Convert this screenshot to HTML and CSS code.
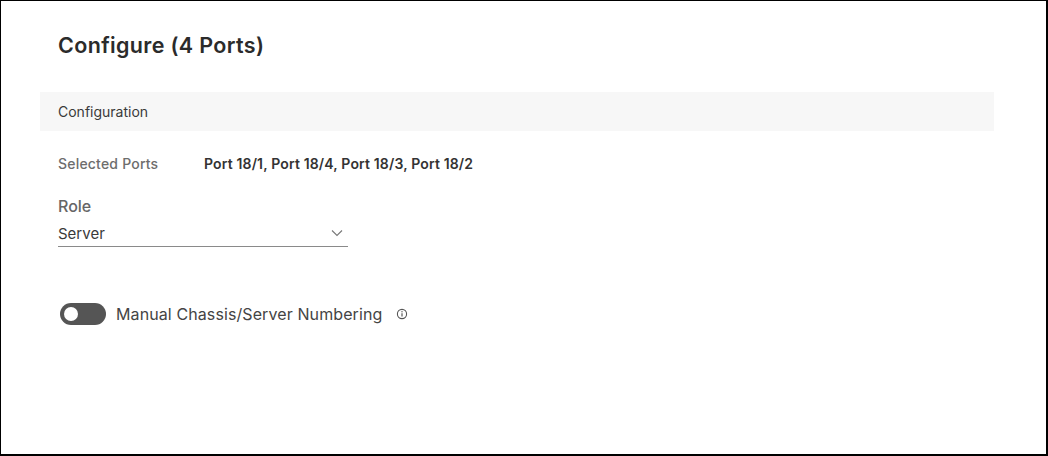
FILE: index.html
```html
<!DOCTYPE html>
<html>
<head>
<meta charset="utf-8">
<link rel="stylesheet" href="styles.css">
</head>
<body>
<div class="frame">
  <h1 class="title">Configure (4 Ports)</h1>
  <div class="section-bar">Configuration</div>
  <div class="content">
    <div class="ports-row">
      <span class="ports-label">Selected Ports</span>
      <span class="ports-value">Port 18/1, Port 18/4, Port 18/3, Port 18/2</span>
    </div>
    <div class="field">
      <div class="field-label">Role</div>
      <div class="select">
        <span>Server</span>
        <svg class="chevron" width="12" height="8" viewBox="0 0 12 8"><path d="M1 1.5 L6 6.5 L11 1.5" fill="none" stroke="#777" stroke-width="1.1"/></svg>
      </div>
    </div>
    <div class="toggle-row">
      <span class="toggle"><span class="knob"></span></span>
      <span class="toggle-label">Manual Chassis/Server Numbering</span>
      <svg class="info" width="12" height="12" viewBox="0 0 12 12"><circle cx="6" cy="6" r="4.6" fill="none" stroke="#555" stroke-width="1.1"/><path d="M6 5.2 V8.4" stroke="#555" stroke-width="1.2"/><circle cx="6" cy="3.7" r="0.7" fill="#555"/></svg>
    </div>
  </div>
</div>
</body>
</html>
```

FILE: styles.css
```css
html, body {
  margin: 0;
  padding: 0;
  background: #fff;
}
body {
  font-family: Inter, "Noto Sans", sans-serif;
  color: #333;
}
.frame {
  box-sizing: border-box;
  width: 1048px;
  height: 456px;
  border-style: solid;
  border-color: #000;
  border-width: 1px 2px 2px 1px;
  padding: 0 52px 0 39px;
}
.title {
  margin: 31px 0 0 18px;
  font-size: 21.5px;
  font-weight: 600;
  line-height: 26px;
  color: #2b2b2b;
  letter-spacing: 0.35px;
}
.section-bar {
  margin-top: 34px;
  height: 39px;
  background: #f7f7f7;
  display: flex;
  align-items: center;
  padding-left: 18px;
  font-size: 14px;
  color: #3a3a3a;
}
.content {
  padding-left: 18px;
}
.ports-row {
  display: flex;
  align-items: center;
  margin-top: 23px;
  height: 18px;
  font-size: 14px;
}
.ports-label {
  width: 146px;
  color: #6d6d6d;
  font-weight: 500;
  letter-spacing: 0.2px;
}
.ports-value {
  color: #333;
  font-weight: 600;
  letter-spacing: 0.15px;
}
.field {
  margin-top: 24px;
  width: 290px;
}
.field-label {
  font-size: 16px;
  color: #666;
  font-weight: 500;
  line-height: 20px;
}
.select {
  display: flex;
  align-items: center;
  justify-content: space-between;
  height: 26px;
  border-bottom: 1px solid #8a8a8a;
  font-size: 15px;
  color: #3a3a3a;
  margin-top: 4px;
  padding-right: 5px;
}
.chevron {
  display: block;
}
.toggle-row {
  display: flex;
  align-items: center;
  margin-top: 56px;
  margin-left: 2px;
}
.toggle {
  position: relative;
  width: 46px;
  height: 22px;
  border-radius: 11px;
  background: #555;
  display: inline-block;
}
.knob {
  position: absolute;
  left: 4px;
  top: 4px;
  width: 14px;
  height: 14px;
  border-radius: 50%;
  background: #fff;
}
.toggle-label {
  margin-left: 10px;
  font-size: 16px;
  color: #444;
  letter-spacing: 0.1px;
}
.info {
  margin-left: 14px;
  display: block;
}
```
